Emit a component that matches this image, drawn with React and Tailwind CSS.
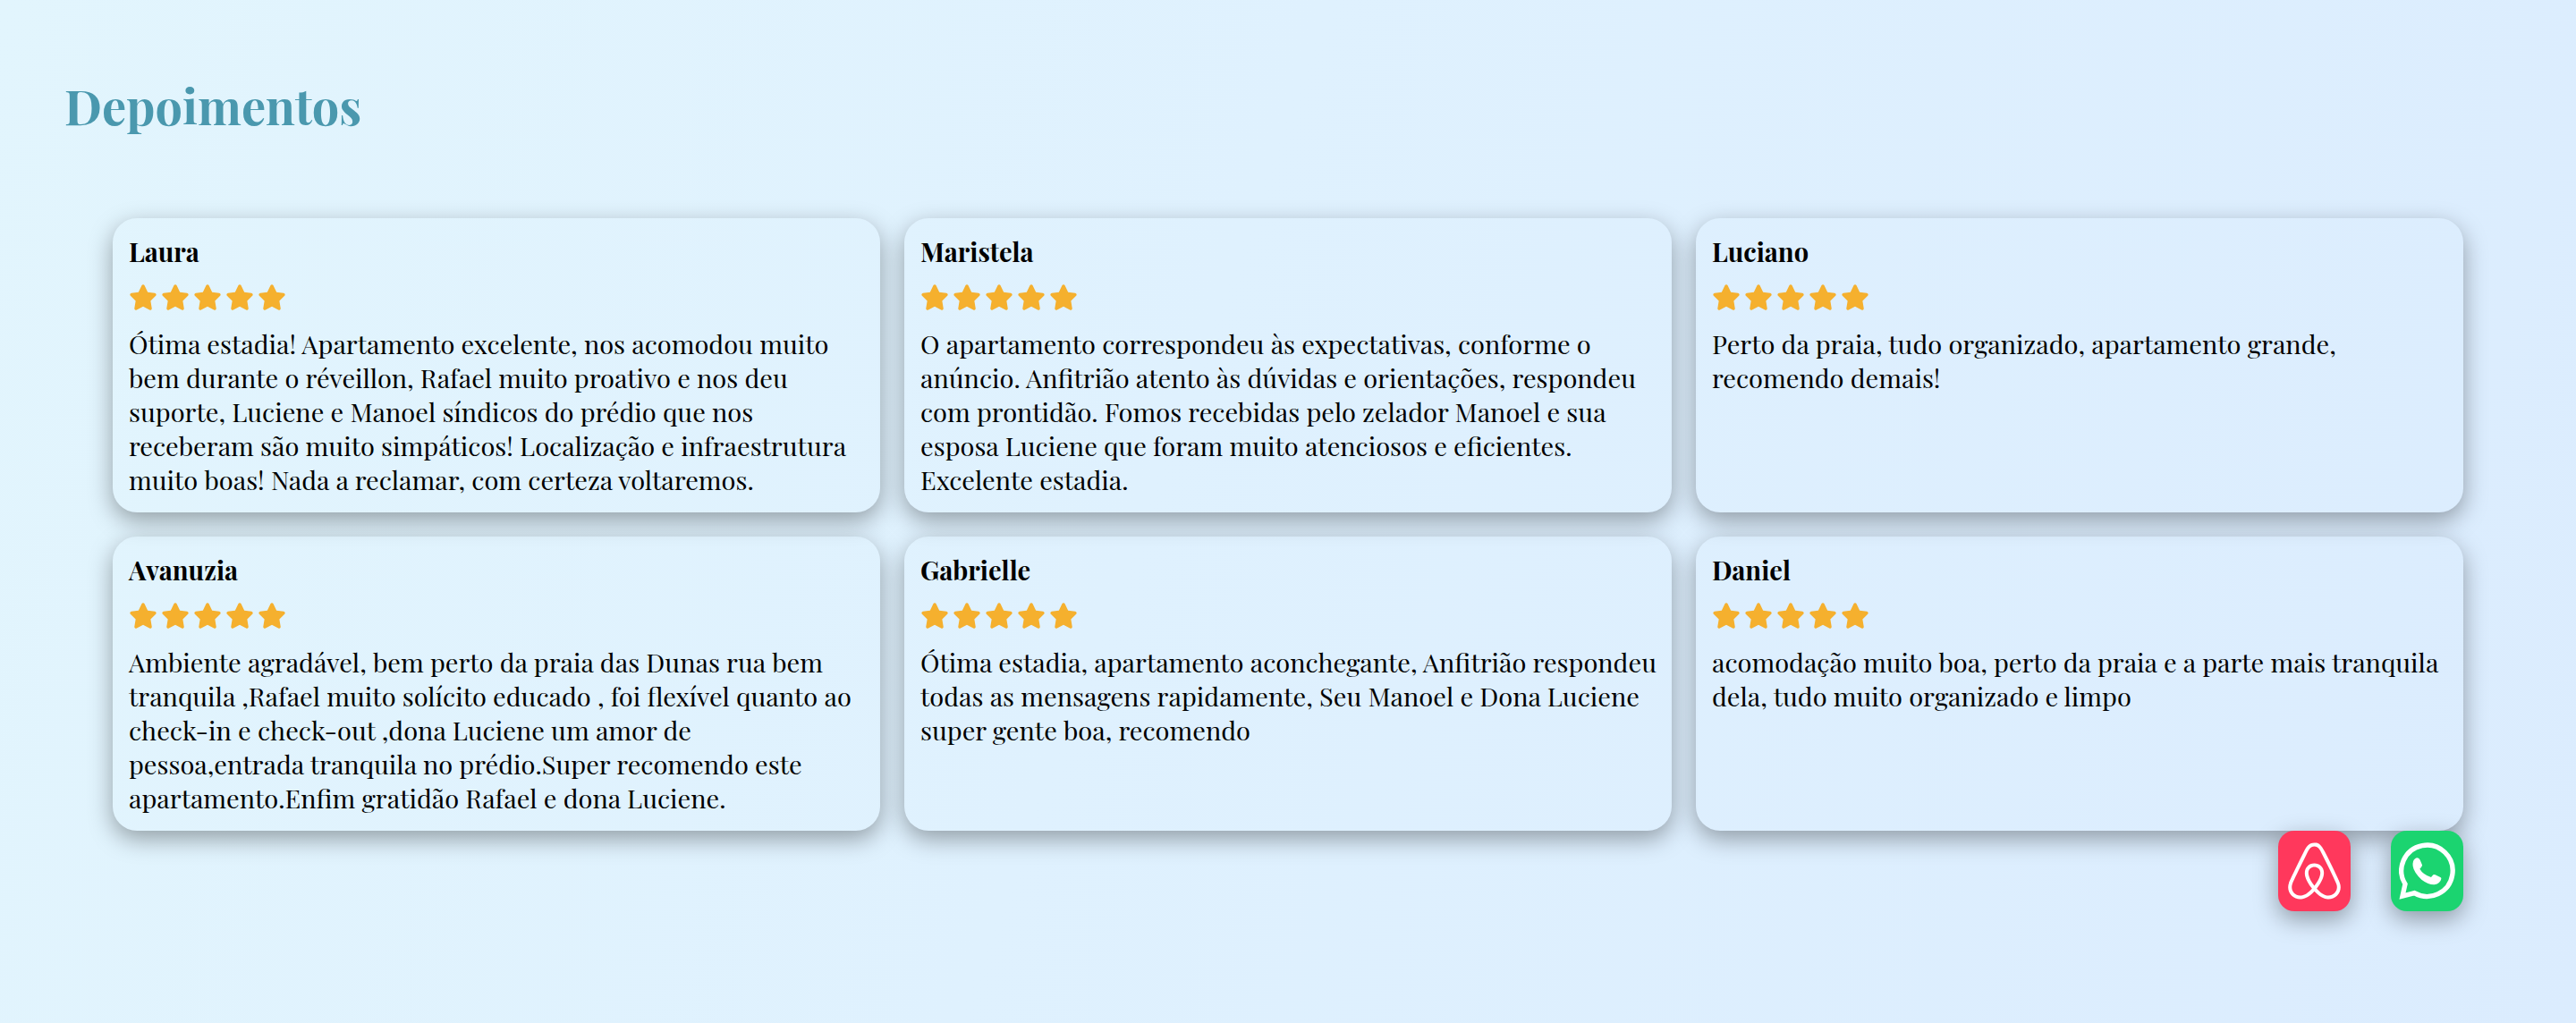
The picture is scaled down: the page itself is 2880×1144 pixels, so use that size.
import { FaStar } from "react-icons/fa6";
import { FaAirbnb } from "react-icons/fa";

const testimonials = [
  { name: "Laura", text: "Ótima estadia! Apartamento excelente, nos acomodou muito bem durante o réveillon, Rafael muito proativo e nos deu suporte, Luciene e Manoel síndicos do prédio que nos receberam são muito simpáticos! Localização e infraestrutura muito boas! Nada a reclamar, com certeza voltaremos." },
  { name: "Maristela", text: "O apartamento correspondeu às expectativas, conforme o anúncio. Anfitrião atento às dúvidas e orientações, respondeu com prontidão. Fomos recebidas pelo zelador Manoel e sua esposa Luciene que foram muito atenciosos e eficientes. Excelente estadia." },
  { name: "Luciano", text: "Perto da praia, tudo organizado, apartamento grande, recomendo demais!" },
  { name: "Avanuzia", text: "Ambiente agradável, bem perto da praia das Dunas rua bem tranquila ,Rafael muito solícito educado , foi flexível quanto ao check-in e check-out ,dona Luciene um amor de pessoa,entrada tranquila no prédio.Super recomendo este apartamento.Enfim gratidão Rafael e dona Luciene." },
  { name: "Gabrielle", text: "Ótima estadia, apartamento aconchegante, Anfitrião respondeu todas as mensagens rapidamente, Seu Manoel e Dona Luciene super gente boa, recomendo" },
  { name: "Daniel", text: "acomodação muito boa, perto da praia e a parte mais tranquila dela, tudo muito organizado e limpo" },
];

function WhatsappIcon({ className }) {
  return (
    <svg viewBox="0 0 189 216" className={className} aria-hidden="true">
      <path d="M21 152 L12 192 L52 182 A86 86 0 1 0 21 152 Z" fill="none" stroke="currentColor" strokeWidth="16" strokeLinejoin="miter" />
      <path d="M48 76 Q52 65 62 64 Q68 65 71 71 L78 88 Q79 92 70 101 Q80 119 108 129 L115 121 Q118 119 122 121 L139 129 Q143 131 142 134 Q139 150 119 154 Q100 155 76 137 Q50 112 47 92 Q46 82 48 76 Z" fill="currentColor" />
    </svg>
  );
}

function Testimonial({ name, text }) {
  return (
    <article className="rounded-[27px] py-[18px] pr-3 pl-[18px] shadow-[0_9px_27px_rgba(0,0,0,0.35)]">
      <h2 className="text-[29px] leading-[38px] font-bold">{name}</h2>
      <div className="mt-[18px] flex gap-1 text-[#f5b02e]" role="img" aria-label="5 de 5 estrelas">
        {[1, 2, 3, 4, 5].map((n) => (
          <FaStar key={n} className="h-[29px] w-8" />
        ))}
      </div>
      <p className="mt-[18px] text-[29px] leading-[38px]">{text}</p>
    </article>
  );
}

export default function App() {
  return (
    <main className="min-h-screen bg-[linear-gradient(110deg,#e2f5fd,#dff1fe_45%,#dbecfe)] pt-20 pb-[126px] font-['Playfair_Display','Liberation_Serif',serif] text-black">
      <h1 className="px-[72px] text-[54px] leading-[76px] font-bold text-[#4a98ae]">Depoimentos</h1>
      <section className="mt-[88px] grid grid-cols-3 gap-[27px] px-[126px]">
        {testimonials.map((t) => (
          <Testimonial key={t.name} {...t} />
        ))}
      </section>
      <nav className="flex justify-end gap-[45px] px-[126px]">
        <a href="#airbnb" aria-label="Airbnb" className="rounded-[18px] bg-[#ff385c] p-[9px] text-white shadow-[0_9px_27px_rgba(0,0,0,0.35)]">
          <FaAirbnb className="h-[72px] w-[63px]" />
        </a>
        <a href="#whatsapp" aria-label="WhatsApp" className="rounded-[18px] bg-[#1bd470] p-[9px] text-white shadow-[0_9px_27px_rgba(0,0,0,0.35)]">
          <WhatsappIcon className="h-[72px] w-[63px]" />
        </a>
      </nav>
    </main>
  );
}
